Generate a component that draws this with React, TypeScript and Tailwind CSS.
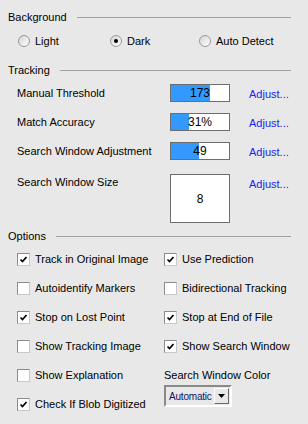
import React from 'react'

const font = "font-['Liberation_Sans',Arial,sans-serif]"

function Heading({ title }: { title: string }) {
  return (
    <div className="flex h-[14px] items-center gap-[10px] pl-[8px] pr-[17px]">
      <span className="leading-[14px]">{title}</span>
      <div className="h-px flex-1 bg-[#a0a0a0]" />
    </div>
  )
}

function Radio({ label, checked }: { label: string; checked?: boolean }) {
  return (
    <div className="flex h-[14px] items-center gap-[5px]">
      <div className="flex h-[12px] w-[12px] items-center justify-center rounded-full border border-[#9a9a9a] bg-gradient-to-br from-[#d4d4d4] to-white">
        {checked && <div className="h-[4px] w-[4px] rounded-full bg-black" />}
      </div>
      <span className="leading-[14px]">{label}</span>
    </div>
  )
}

function Check({ label, checked }: { label: string; checked?: boolean }) {
  return (
    <div className="flex h-[14px] items-center gap-[5px]">
      <div className="flex h-[13px] w-[13px] items-center justify-center border border-t-[#8c8c8c] border-l-[#8c8c8c] border-r-[#c8c8c8] border-b-[#c8c8c8] bg-white">
        {checked && (
          <svg width="9" height="9" viewBox="0 0 9 9">
            <path d="M1.5 4.5 L3.5 6.5 L7.5 2" fill="none" stroke="black" strokeWidth="1.7" />
          </svg>
        )}
      </div>
      <span className="leading-[14px] whitespace-nowrap">{label}</span>
    </div>
  )
}

function Bar({ text, fill }: { text: string; fill: number }) {
  return (
    <div className="relative h-[18px] w-[60px] border border-[#6e6e6e] bg-white">
      <div className="h-full bg-[#3399ff]" style={{ width: fill }} />
      <span className="absolute inset-0 flex items-center justify-center text-[12px] leading-none">
        {text}
      </span>
    </div>
  )
}

function TrackRow({ label, text, fill }: { label: string; text: string; fill: number }) {
  return (
    <div className="flex h-[18px] items-center pl-[17px]">
      <span className="w-[153px] leading-[14px]">{label}</span>
      <Bar text={text} fill={fill} />
      <span className="ml-[19px] mt-[2px] text-[#2222ee]">Adjust...</span>
    </div>
  )
}

export default function App() {
  return (
    <div className={`${font} h-[424px] w-[308px] overflow-hidden bg-[#e8e8e8] text-[11px] text-black`}>
      <div className="pt-[10px]">
        <Heading title="Background" />
      </div>

      <div className="mt-[10px] flex pl-[18px]">
        <div className="w-[92px]">
          <Radio label="Light" />
        </div>
        <div className="w-[89px]">
          <Radio label="Dark" checked />
        </div>
        <Radio label="Auto Detect" />
      </div>

      <div className="mt-[15px]">
        <Heading title="Tracking" />
      </div>

      <div className="mt-[7px] flex flex-col gap-[11px]">
        <TrackRow label="Manual Threshold" text="173" fill={39} />
        <TrackRow label="Match Accuracy" text="31%" fill={18} />
        <TrackRow label="Search Window Adjustment" text="49" fill={28} />
      </div>

      <div className="mt-[14px] flex pl-[17px]">
        <span className="mt-[1px] w-[153px] leading-[14px]">Search Window Size</span>
        <div className="flex h-[49px] w-[60px] items-center justify-center border border-[#6e6e6e] bg-white text-[12px]">
          8
        </div>
        <span className="ml-[19px] mt-[2px] text-[#2222ee]">Adjust...</span>
      </div>

      <div className="mt-[6px]">
        <Heading title="Options" />
      </div>

      <div className="mt-[9px] flex pl-[17px]">
        <div className="flex w-[147px] flex-col gap-[15px]">
          <Check label="Track in Original Image" checked />
          <Check label="Autoidentify Markers" />
          <Check label="Stop on Lost Point" checked />
          <Check label="Show Tracking Image" />
          <Check label="Show Explanation" />
          <Check label="Check If Blob Digitized" checked />
        </div>
        <div className="flex flex-col gap-[15px]">
          <Check label="Use Prediction" checked />
          <Check label="Bidirectional Tracking" />
          <Check label="Stop at End of File" checked />
          <Check label="Show Search Window" checked />
          <div className="flex flex-col">
            <span className="leading-[14px]">Search Window Color</span>
            <div className="mt-[3px] flex h-[22px] w-[68px] items-center border-[2px] border-t-[#8a8a8a] border-l-[#8a8a8a] border-r-white border-b-white pl-[3px] pr-[1px]">
              <span className="flex-1 whitespace-nowrap text-[10px] tracking-[-0.2px] text-[#111166]">Automatic</span>
              <div className="flex h-[16px] w-[15px] shrink-0 items-center justify-center border border-t-white border-l-white border-r-[#6a6a6a] border-b-[#6a6a6a] bg-[#e8e8e8]">
                <svg width="7" height="4" viewBox="0 0 7 4">
                  <path d="M0 0 H7 L3.5 4 Z" fill="black" />
                </svg>
              </div>
            </div>
          </div>
        </div>
      </div>
    </div>
  )
}
